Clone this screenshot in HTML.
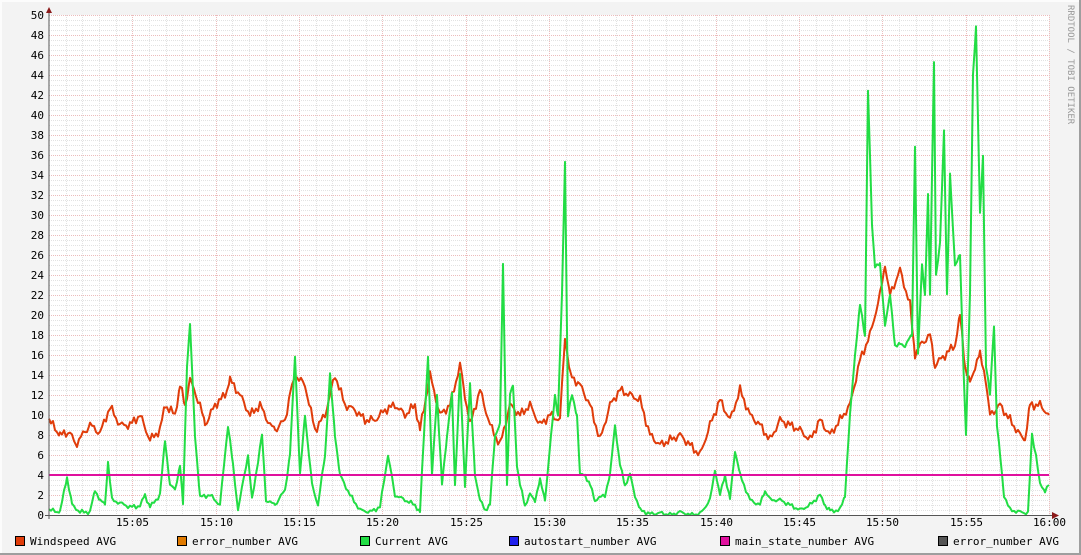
<!DOCTYPE html>
<html><head><meta charset="utf-8"><style>
html,body{margin:0;padding:0;background:#f3f3f3;}
svg{display:block;}
text{font-family:"DejaVu Sans Mono","Liberation Mono",monospace;font-size:11px;fill:#000;}
</style></head><body>
<svg id="g" width="1081" height="555" xmlns="http://www.w3.org/2000/svg">
<rect x="0" y="0" width="1081" height="555" fill="#f3f3f3"/>
<rect x="0" y="0" width="1081" height="2" fill="#fcfcfc"/>
<rect x="0" y="0" width="2" height="555" fill="#fcfcfc"/>
<rect x="1079" y="0" width="2" height="555" fill="#9e9e9e"/>
<rect x="0" y="553" width="1081" height="2" fill="#9e9e9e"/>
<rect x="49" y="15" width="1000" height="500" fill="#ffffff"/>
<g id="grid"></g>
<g id="lines"></g>
<line x1="49" y1="475" x2="1049" y2="475" stroke="#e0109e" stroke-width="2"/>
<line x1="49" y1="10" x2="49" y2="519" stroke="#555" stroke-width="1"/>
<line x1="45" y1="515.5" x2="1056" y2="515.5" stroke="#555" stroke-width="1"/>
<polygon points="46,13 52,13 49,7" fill="#8b1a1a"/>
<polygon points="1052,512 1052,519 1059,515.5" fill="#8b1a1a"/>
<g id="labels"></g>
<text x="1068" y="5" transform="rotate(90 1068 5)" style="font-size:9px;fill:#999">RRDTOOL / TOBI OETIKER</text>
<g>
<rect x="15.5" y="536.5" width="9" height="9" fill="#e03c0a" stroke="#000"/><text x="30" y="545">Windspeed AVG</text>
<rect x="177.5" y="536.5" width="9" height="9" fill="#e07a00" stroke="#000"/><text x="192" y="545">error_number AVG</text>
<rect x="360.5" y="536.5" width="9" height="9" fill="#22dd44" stroke="#000"/><text x="375" y="545">Current AVG</text>
<rect x="509.5" y="536.5" width="9" height="9" fill="#2020ee" stroke="#000"/><text x="524" y="545">autostart_number AVG</text>
<rect x="720.5" y="536.5" width="9" height="9" fill="#e0109e" stroke="#000"/><text x="735" y="545">main_state_number AVG</text>
<rect x="938.5" y="536.5" width="9" height="9" fill="#555555" stroke="#000"/><text x="953" y="545">error_number AVG</text>
</g>
</svg>
<script>
var NS="http://www.w3.org/2000/svg";
function el(p,t,a,txt){var e=document.createElementNS(NS,t);for(var k in a)e.setAttribute(k,a[k]);if(txt!=null)e.textContent=txt;p.appendChild(e);return e;}
var grid=document.getElementById('grid'),lab=document.getElementById('labels'),lines=document.getElementById('lines');
for(var i=0;i<=100;i++){var y=515-i*5+0.5;if(i%4==0)continue;el(grid,'line',{x1:49,x2:1049,y1:y,y2:y,stroke:'#e2e2e2','stroke-dasharray':'1,1'});}
for(var m=0;m<=60;m++){var x=49+m*1000/60;x=Math.round(x)+0.5;if(m%5==0)continue;el(grid,'line',{x1:x,x2:x,y1:15,y2:515,stroke:'#e2e2e2','stroke-dasharray':'1,1'});}
for(var v=0;v<=50;v+=2){var y=515-v*10+0.5;el(grid,'line',{x1:49,x2:1049,y1:y,y2:y,stroke:'#ecbcbc','stroke-dasharray':'1,1'});el(lab,'text',{x:44,y:515-v*10+4,'text-anchor':'end'},String(v));}
for(var m=5;m<=60;m+=5){var x=Math.round(49+m*1000/60)+0.5;el(grid,'line',{x1:x,x2:x,y1:15,y2:515,stroke:'#ecbcbc','stroke-dasharray':'1,1'});var mm=m==60?'16:00':'15:'+(m<10?'0'+m:m);el(lab,'text',{x:x,y:526,'text-anchor':'middle'},mm);}
var W=[49,9.5,60,8,70,8.3,75,7,90,9,100,8.2,110,10.8,120,9,130,9,140,10,150,7.5,160,8.5,165,11,175,10,180,13,185,11,190,13.5,200,11,205,9,215,11,225,12,230,13.5,240,12,250,10,260,11,270,9,275,8.5,285,9.5,290,12,295,14,305,13,315,8.5,325,10,335,14,345,11,355,10.5,365,9.5,375,9.5,385,10.5,395,11,405,10,415,11,420,8.5,430,14,440,10,450,11,460,15,465,12,470,9,480,12.5,490,9,500,7,510,11,520,10,530,11,540,9,550,10,560,9.5,565,18,570,14,580,13,590,11,600,7.5,610,11,620,12.5,630,12,640,11.5,650,8,660,7,670,7.5,680,8,690,7,700,6,710,9,720,11.5,730,9.5,740,12.5,750,10,760,9,770,7.5,780,9.5,790,9,800,8.5,810,7.5,820,9.5,830,8,840,9.5,850,11,860,15.5,870,18,880,22,885,25,890,22,900,24.5,910,21,915,16,920,17,930,18,935,15,945,16,955,17,960,20,965,15,970,13,975,15,980,16,985,14,990,10,1000,11,1010,9.5,1020,8,1025,7.5,1030,11,1040,11,1049,10];
var C=[49,0.5,60,0.3,67,3.8,72,1,80,0.3,90,0.3,95,2.5,100,1.5,105,1,108,5.3,112,1.5,120,1.2,130,0.8,140,0.9,145,2,150,0.8,160,2,165,7.5,170,3,175,2.5,180,5,183,1,187,15,190,19,195,8,200,1.8,210,2,220,1,228,9,233,5,238,0.5,248,6,252,1.5,262,8,266,1.5,275,1,285,2.5,290,6,295,16,300,4,305,10,312,3,318,1,325,6,330,14,335,8,340,4,350,2,360,0.5,370,0.3,380,0.8,388,6,395,2,405,1.5,415,1,420,0.3,428,16,432,4,437,12,442,3,447,8,452,12,455,3,460,14,465,3,470,13,475,4,480,1.5,485,0.5,490,1,495,8,500,9,503,25,507,3,510,12,513,13,517,5,520,3,525,1,530,2,535,1.5,540,3.5,545,1.5,555,12,558,10,562,22,565,35.5,568,10,572,12,577,10,580,4,585,4,590,3,595,1.5,605,2,610,4,615,9,620,5,625,3,630,4,635,2,640,0.5,650,0.1,660,0.2,670,0,680,0.3,690,0,700,0.1,710,1.5,715,4.5,720,2,725,4,730,1.5,735,6.5,740,4,750,1.5,760,1,765,2.5,770,1.5,780,1.5,790,1,800,0.5,810,1,820,2,825,1,830,0.4,840,0.5,845,2,850,10,855,16,860,21,865,18,868,42.5,872,29,875,25,880,25,885,19,890,22,895,17,900,17,905,17,912,18,915,37,918,16,922,25,925,22,928,32,930,22,934,45.5,936,24,940,27,944,38.5,947,22,950,34,955,25,960,26,963,16,966,8,970,22,973,44,976,48.9,980,30,983,36,986,15,990,12,994,19,997,9,1000,6,1004,2,1010,0.5,1020,0.3,1028,0.2,1032,8,1036,6,1040,3,1045,2.5,1049,3];
function pts(a,jit){var s=[];for(var i=0;i<a.length-2;i+=2){var x0=a[i],v0=a[i+1],x1=a[i+2],v1=a[i+3];for(var x=x0;x<x1;x+=2){var t=(x-x0)/(x1-x0);var v=v0+(v1-v0)*t+(Math.sin(x*1.7)+Math.sin(x*0.63))*jit;if(v<0)v=0;s.push(x+','+(515-v*10).toFixed(1));}}s.push(a[a.length-2]+','+(515-a[a.length-1]*10));return s.join(' ');}
el(lines,'polyline',{points:pts(W,0.25),fill:'none',stroke:'#e03c0a','stroke-width':2,'stroke-linejoin':'round'});
el(lines,'polyline',{points:pts(C,0.12),fill:'none',stroke:'#22dd44','stroke-width':2,'stroke-linejoin':'round'});
</script>
</body></html>
